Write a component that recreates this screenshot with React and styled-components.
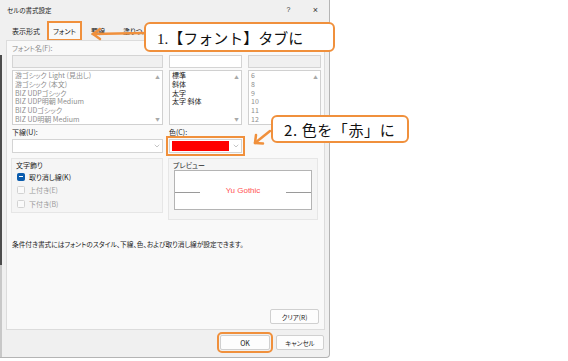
import React from "react";
import styled, { createGlobalStyle } from "styled-components";
import { ChevronDown } from "lucide-react";

const GlobalStyle = createGlobalStyle`
  html, body {
    margin: 0;
    padding: 0;
    background: #ffffff;
  }
  body {
    width: 568px;
    height: 361px;
    overflow: hidden;
    font-family: "Noto Sans CJK JP", "Noto Sans", sans-serif;
    font-feature-settings: "palt";
  }
`;

const ORANGE = "#f0903c";

const Page = styled.div`
  position: relative;
  width: 568px;
  height: 361px;
`;

const Dialog = styled.div`
  width: 330px;
  height: 358px;
  box-sizing: border-box;
  border-right: 1px solid #b4b4b4;
  border-bottom: 1px solid #b4b4b4;
  border-bottom-right-radius: 4px;
  background:
    linear-gradient(to bottom, #f0f0f0 55px, #4c4c4c 55px, #4c4c4c 265px, #c8c8c8 265px) left / 2px 100% no-repeat,
    #f0f0f0;
  display: flex;
  flex-direction: column;
`;

const TitleBar = styled.div`
  height: 19px;
  display: flex;
  align-items: center;
  padding-left: 7px;
  font-size: 6.5px;
  color: #1a1a1a;
`;

const Title = styled.span`
  flex: 1;
`;

const Control = styled.span`
  width: 27px;
  text-align: center;
  font-family: "Liberation Sans", sans-serif;
  font-size: ${(p) => p.$size || 7}px;
  color: #333;
`;

const Tabs = styled.div`
  height: 21px;
  display: flex;
  align-items: flex-end;
  padding-left: 6px;
`;

const Tab = styled.div`
  height: 18px;
  box-sizing: border-box;
  display: flex;
  align-items: center;
  padding: 0 ${(p) => p.$pad ?? 6}px;
  font-size: 7px;
  color: #1a1a1a;
  background: ${(p) => (p.$active ? "#f9f9f9" : "transparent")};
  ${(p) =>
    p.$active &&
    `
    outline: 2px solid ${ORANGE};
    outline-offset: -1px;
  `}
`;

const Panel = styled.div`
  height: 290px;
  box-sizing: border-box;
  margin: 0 4px 0 6px;
  border: 1px solid #dcdcdc;
  background: #f9f9f9;
  padding: 0 4px 0 5px;
  display: flex;
  flex-direction: column;
`;

const Grid = styled.div`
  display: grid;
  grid-template-columns: 151px 73px 73px;
  column-gap: 6px;
`;

const Column = styled.div`
  display: flex;
  flex-direction: column;
`;

const Label = styled.div`
  height: 14px;
  display: flex;
  align-items: center;
  font-size: 7px;
  color: ${(p) => (p.$muted ? "#8c8c8c" : "#1f1f1f")};
  white-space: nowrap;
`;

const Input = styled.div`
  height: 13px;
  box-sizing: border-box;
  border: 1px solid #d4d4d4;
  background: ${(p) => (p.$disabled ? "#f0f0f0" : "#ffffff")};
`;

const ListBox = styled.div`
  height: 55px;
  margin-top: 2px;
  box-sizing: border-box;
  border: 1px solid #d0d0d0;
  background: #ffffff;
  display: flex;
`;

const Items = styled.div`
  flex: 1;
  padding: 0 0 0 2px;
  overflow: hidden;
`;

const Item = styled.div`
  height: 8.8px;
  line-height: 8.8px;
  font-size: 7px;
  white-space: nowrap;
  color: ${(p) => (p.$muted ? "#8e8e8e" : "#1a1a1a")};
`;

const ScrollBar = styled.div`
  width: 9px;
  display: flex;
  flex-direction: column;
  justify-content: space-between;
  align-items: center;
  padding: 3px 0 2px;
  font-size: 4.5px;
  color: #a8a8a8;
`;

const Select = styled.div`
  height: 14px;
  box-sizing: border-box;
  border: 1px solid #d4d4d4;
  background: #ffffff;
  display: flex;
  align-items: center;
  padding: 1px 1px 1px 2px;
  gap: 3px;
  ${(p) =>
    p.$highlight &&
    `
    outline: 2px solid ${ORANGE};
    outline-offset: 1px;
  `}
`;

const Swatch = styled.div`
  flex: 1;
  align-self: stretch;
  background: #ff0000;
`;

const SelectSpacer = styled.div`
  flex: 1;
`;

const GroupRow = styled.div`
  display: grid;
  grid-template-columns: 152px 150px;
  column-gap: 5px;
  margin-top: 5px;
  margin-left: -1px;
  align-items: start;
`;

const Group = styled.div`
  height: ${(p) => p.$h}px;
  box-sizing: border-box;
  border: 1px solid #e6e6e6;
  background: #f5f5f5;
  padding: 0 4px;
  display: flex;
  flex-direction: column;
`;

const GroupLabel = styled.div`
  height: 10px;
  display: flex;
  align-items: center;
  font-size: 7px;
  color: #1f1f1f;
  margin-top: 1px;
`;

const CheckRow = styled.div`
  height: 13.5px;
  display: flex;
  align-items: center;
  gap: 4px;
  padding-left: 1px;
  font-size: 7px;
  color: ${(p) => (p.$muted ? "#9a9a9a" : "#1a1a1a")};
  &:first-of-type {
    margin-top: 3px;
  }
`;

const Box = styled.span`
  width: 8px;
  height: 8px;
  box-sizing: border-box;
  border-radius: 1.5px;
  display: inline-flex;
  align-items: center;
  justify-content: center;
  background: ${(p) => (p.$checked ? "#0b5cad" : "#fafafa")};
  border: 1px solid ${(p) => (p.$checked ? "#0b5cad" : "#d2d2d2")};
  &::after {
    content: "";
    display: ${(p) => (p.$checked ? "block" : "none")};
    width: 4px;
    height: 1px;
    background: #ffffff;
  }
`;

const PreviewBox = styled.div`
  height: 40px;
  margin: 0 1px;
  box-sizing: border-box;
  border: 1px solid #b4b4b4;
  background: #ffffff;
  display: flex;
  align-items: center;
  justify-content: space-between;
`;

const Rule = styled.div`
  width: 25px;
  height: 1px;
  background: #9a9a9a;
  margin-top: 4px;
`;

const PreviewText = styled.span`
  font-family: "Liberation Sans", sans-serif;
  font-size: 8px;
  color: #ff5252;
`;

const Note = styled.div`
  margin-top: 19px;
  font-size: 6.7px;
  color: #1a1a1a;
  white-space: nowrap;
`;

const ClearRow = styled.div`
  margin-top: auto;
  margin-bottom: 5px;
  display: flex;
  justify-content: flex-end;
  padding-right: 1px;
`;

const Button = styled.div`
  width: ${(p) => p.$w}px;
  height: 15px;
  box-sizing: border-box;
  border: 1px solid #d0d0d0;
  border-radius: 2px;
  background: #fdfdfd;
  display: flex;
  align-items: center;
  justify-content: center;
  font-size: ${(p) => p.$fs || 6.5}px;
  font-weight: ${(p) => (p.$bold ? 700 : 400)};
  color: #1a1a1a;
  ${(p) =>
    p.$highlight &&
    `
    outline: 2px solid ${ORANGE};
    outline-offset: 1px;
  `}
`;

const Footer = styled.div`
  flex: 1;
  display: flex;
  align-items: center;
  justify-content: flex-end;
  gap: 6px;
  padding: 0 5px 2px 0;
`;

const Callout = styled.div`
  position: absolute;
  left: ${(p) => p.$x}px;
  top: ${(p) => p.$y}px;
  width: ${(p) => p.$w}px;
  height: ${(p) => p.$h}px;
  box-sizing: border-box;
  border: 2px solid ${ORANGE};
  border-radius: 6px;
  background: #ffffff;
  display: flex;
  align-items: center;
  padding-left: ${(p) => p.$pad}px;
  font-family: ${(p) => p.$font};
  font-feature-settings: normal;
  font-size: 15px;
  letter-spacing: ${(p) => p.$ls || 0}px;
  color: #111;
  white-space: nowrap;
`;

const Arrows = styled.svg`
  position: absolute;
  left: 0;
  top: 0;
  pointer-events: none;
`;

const fonts = [
  "游ゴシック Light (見出し)",
  "游ゴシック (本文)",
  "BIZ UDPゴシック",
  "BIZ UDP明朝 Medium",
  "BIZ UDゴシック",
  "BIZ UD明朝 Medium",
];
const styles = ["標準", "斜体", "太字", "太字 斜体"];
const sizes = ["6", "8", "9", "10", "11", "12"];

const List = ({ items, muted }) => (
  <ListBox>
    <Items>
      {items.map((t) => (
        <Item key={t} $muted={muted}>
          {t}
        </Item>
      ))}
    </Items>
    <ScrollBar>
      <span>▲</span>
      <span>▼</span>
    </ScrollBar>
  </ListBox>
);

export default function App() {
  return (
    <Page>
      <GlobalStyle />
      <Dialog>
        <TitleBar>
          <Title>セルの書式設定</Title>
          <Control>?</Control>
          <Control $size={9}>×</Control>
        </TitleBar>

        <Tabs>
          <Tab>表示形式</Tab>
          <Tab $active $pad={5} style={{ marginLeft: 2 }}>
            フォント
          </Tab>
          <Tab $pad={8} style={{ marginLeft: 2 }}>
            罫線
          </Tab>
          <Tab $pad={8} style={{ marginLeft: 2 }}>
            塗りつぶし
          </Tab>
        </Tabs>

        <Panel>
          <Grid>
            <Column>
              <Label $muted>フォント名(F):</Label>
              <Input $disabled />
              <List items={fonts} muted />
            </Column>
            <Column>
              <Label>スタイル(O):</Label>
              <Input />
              <List items={styles} />
            </Column>
            <Column>
              <Label $muted>サイズ(S):</Label>
              <Input $disabled />
              <List items={sizes} muted />
            </Column>
          </Grid>

          <Grid>
            <Column>
              <Label>下線(U):</Label>
              <Select>
                <SelectSpacer />
                <ChevronDown size={8} color="#8a8a8a" strokeWidth={1.5} />
              </Select>
            </Column>
            <Column>
              <Label>色(C):</Label>
              <Select $highlight>
                <Swatch />
                <ChevronDown size={8} color="#8a8a8a" strokeWidth={1.5} />
              </Select>
            </Column>
          </Grid>

          <GroupRow>
            <Group $h={55}>
              <GroupLabel>文字飾り</GroupLabel>
              <CheckRow>
                <Box $checked />
                取り消し線(K)
              </CheckRow>
              <CheckRow $muted>
                <Box />
                上付き(E)
              </CheckRow>
              <CheckRow $muted>
                <Box />
                下付き(B)
              </CheckRow>
            </Group>
            <Group $h={62}>
              <GroupLabel>プレビュー</GroupLabel>
              <PreviewBox>
                <Rule />
                <PreviewText>Yu Gothic</PreviewText>
                <Rule />
              </PreviewBox>
            </Group>
          </GroupRow>

          <Note>
            条件付き書式にはフォントのスタイル、下線、色、および取り消し線が設定できます。
          </Note>

          <ClearRow>
            <Button $w={49}>クリア(R)</Button>
          </ClearRow>
        </Panel>

        <Footer>
          <Button $w={50} $fs={7} $highlight>
            OK
          </Button>
          <Button $w={48}>キャンセル</Button>
        </Footer>
      </Dialog>

      <Callout
        $x={144}
        $y={22}
        $w={191}
        $h={30}
        $pad={11}
        $font={`"Liberation Serif", "Noto Sans CJK JP", serif`}
      >
        1.【フォント】タブに
      </Callout>
      <Callout
        $x={271}
        $y={115}
        $w={138}
        $h={28}
        $pad={11}
        $ls={0.6}
        $font={`"Noto Sans CJK JP", sans-serif`}
      >
        2. 色を「赤」に
      </Callout>

      <Arrows width="568" height="361" viewBox="0 0 568 361">
        <g fill="none" stroke={ORANGE} strokeWidth="2.5" strokeLinecap="round" strokeLinejoin="round">
          <path d="M143 33 L93 34" />
          <path d="M100 29 L93 34 L100 39" />
          <path d="M270 131 L255 143" />
          <path d="M256 135 L255 143 L263 143.5" />
        </g>
      </Arrows>
    </Page>
  );
}
